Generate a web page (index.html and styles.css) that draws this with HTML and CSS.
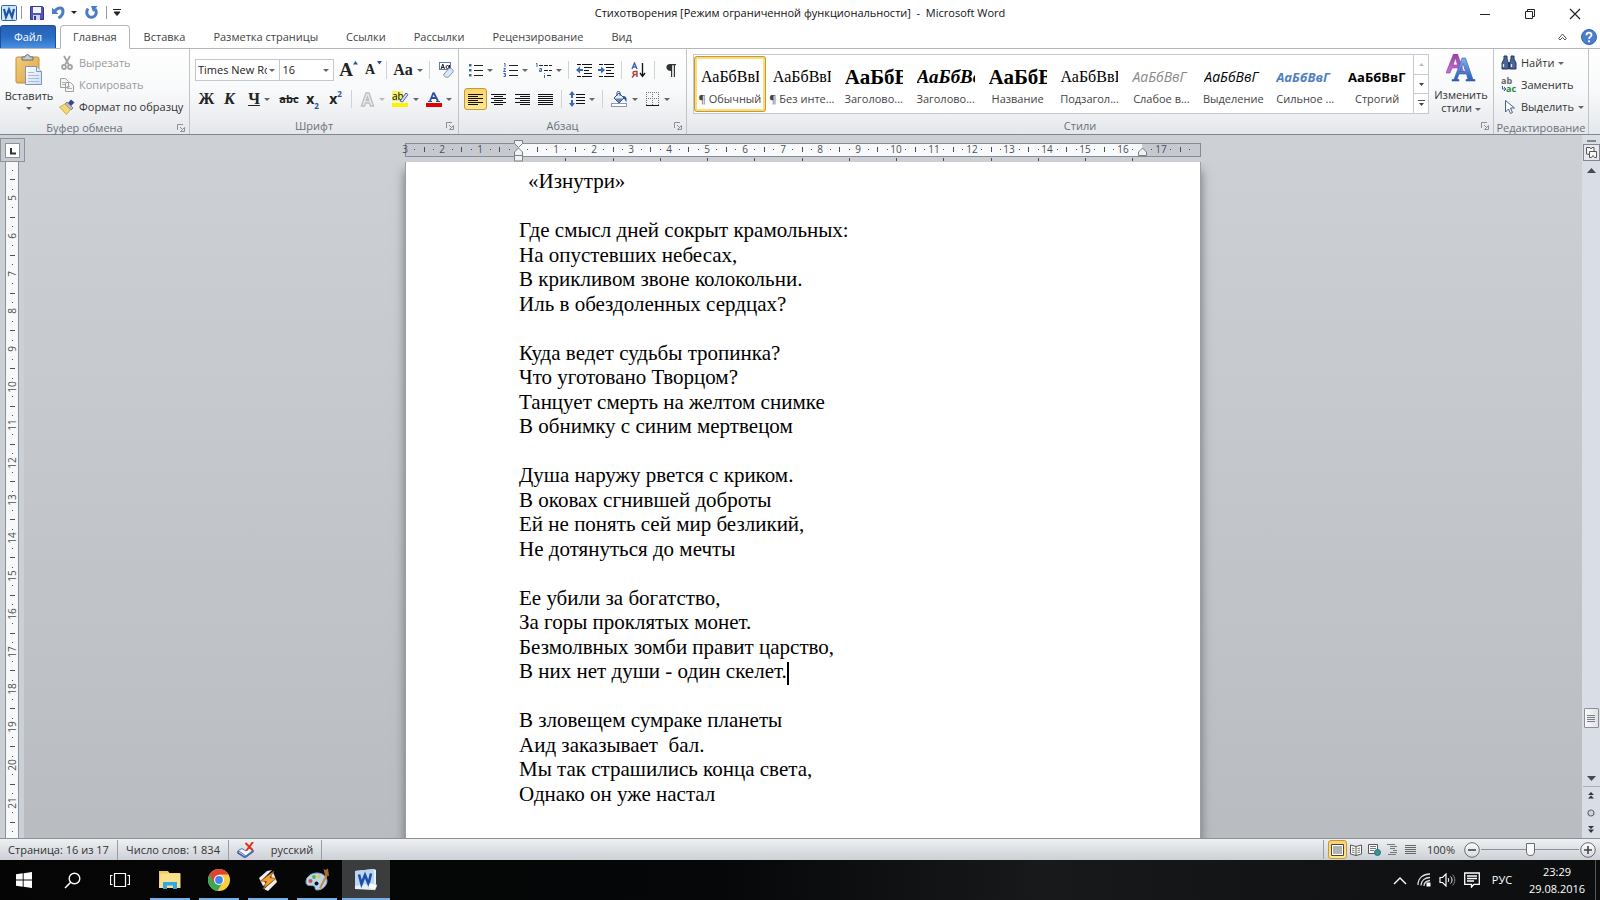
FILE: index.html
```html
<!DOCTYPE html>
<html lang="ru">
<head>
<meta charset="utf-8">
<title>Стихотворения - Microsoft Word</title>
<link rel="stylesheet" href="styles.css">
</head>
<body>
<svg class="defs" aria-hidden="true">
  <defs>
    <linearGradient id="gBlue" x1="0" y1="0" x2="0" y2="1"><stop offset="0" stop-color="#7fb2ee"/><stop offset="1" stop-color="#2a5db8"/></linearGradient>
    <linearGradient id="gPurple" x1="0" y1="0" x2="0" y2="1"><stop offset="0" stop-color="#9a3fa8"/><stop offset="1" stop-color="#c872d4"/></linearGradient>
    <linearGradient id="gBoard" x1="0" y1="0" x2="1" y2="1"><stop offset="0" stop-color="#f3cd7c"/><stop offset="1" stop-color="#dda443"/></linearGradient>
    <linearGradient id="gPage" x1="0" y1="0" x2="1" y2="1"><stop offset="0" stop-color="#fff"/><stop offset="1" stop-color="#c9dcf5"/></linearGradient>
    <linearGradient id="gKnob" x1="0" y1="0" x2="0" y2="1"><stop offset="0" stop-color="#fff"/><stop offset="1" stop-color="#d4d7db"/></linearGradient>
    <symbol id="launch" viewBox="0 0 8 8"><path d="M.5 6V.5H6M3 3l3 3M7.500 3.500v4h-4z" fill="none" stroke="#8a8f98"/></symbol>
  </defs>
</svg>

<header class="titlebar">
  <div class="quick">
    <svg width="16" height="16" viewBox="0 0 16 16"><rect x=".5" y=".5" width="15" height="15" rx="1" fill="#d3e6fa" stroke="#2b62ad"/><path d="M3 4l2 8 3-7.500L11 12l2-8" fill="none" stroke="#1d56a8" stroke-width="2.200"/></svg>
    <i class="bar"></i>
    <button class="qbtn" aria-label="Сохранить"><svg width="14" height="14" viewBox="0 0 14 14"><path d="M.5.5h12l1 1v12H.5z" fill="#5257b5" stroke="#33388f"/><rect x="3" y="1" width="8" height="6" fill="#f2f5fc"/><rect x="3" y="9" width="7" height="5" fill="#cfd4ea"/><rect x="4" y="10" width="2" height="4" fill="#33388f"/></svg></button>
    <button class="qbtn undo" aria-label="Отменить"><svg width="13" height="13" viewBox="0 0 13 13"><path d="M3 5C6 1 11 1 11 5.500c0 3-2 5-4.500 6.500" fill="none" stroke="#4a7cc8" stroke-width="3"/><path d="M0 1.500v6.500h6.500z" fill="#4a7cc8"/></svg><span class="arr dark"></span></button>
    <button class="qbtn" aria-label="Повторить"><svg width="13" height="13" viewBox="0 0 13 13"><path d="M3 2.500C0 7 3 11.300 6.500 11.300S13 7 10 3" fill="none" stroke="#4a7cc8" stroke-width="3"/><path d="M6 0h6.500L8 6z" fill="#4a7cc8"/></svg></button>
    <i class="bar"></i>
    <button class="qbtn narrow" aria-label="Настройка панели"><svg width="8" height="7" viewBox="0 0 8 7"><path d="M0 .5h8M1 3h6L4 6.500z" stroke="#222" fill="#222" stroke-width="1"/></svg></button>
  </div>
  <h1 class="caption">Стихотворения [Режим ограниченной функциональности]&nbsp; -&nbsp; Microsoft Word</h1>
  <div class="winbtns">
    <button aria-label="Свернуть"><svg width="12" height="12" viewBox="0 0 12 12"><path d="M1 6.500h10" stroke="#222"/></svg></button>
    <button aria-label="Восстановить"><svg width="12" height="12" viewBox="0 0 12 12"><path d="M1.500 3.500h7v7h-7zM3.500 3V1.500h7v7H9" fill="none" stroke="#222"/></svg></button>
    <button aria-label="Закрыть"><svg width="12" height="12" viewBox="0 0 12 12"><path d="M1 1l10 10M11 1L1 11" stroke="#222" stroke-width="1.200"/></svg></button>
  </div>
</header>

<nav class="tabs">
  <button class="tab file">Файл</button>
  <button class="tab active">Главная</button>
  <button class="tab">Вставка</button>
  <button class="tab">Разметка страницы</button>
  <button class="tab">Ссылки</button>
  <button class="tab">Рассылки</button>
  <button class="tab">Рецензирование</button>
  <button class="tab">Вид</button>
  <div class="tabtools">
    <button aria-label="Свернуть ленту"><svg width="9" height="8" viewBox="0 0 9 8"><path d="M.7 5.500L4.500 1l3.800 4.500L7 7 4.500 4.500 2 7z" fill="#fff" stroke="#555"/></svg></button>
    <button aria-label="Справка"><svg width="16" height="16" viewBox="0 0 16 16"><circle cx="8" cy="8" r="7.500" fill="#4a7fd0" stroke="#2f62b0"/><path d="M5.500 6.200C5.500 2.800 10.700 3 10.500 6 10.400 7.800 8 7.800 8 10" fill="none" stroke="#fff" stroke-width="1.800"/><circle cx="8" cy="12.300" r="1.100" fill="#fff"/></svg></button>
  </div>
</nav>

<section class="ribbon">
  <div class="group clip">
    <div class="gbody">
      <button class="big paste">
        <svg width="28" height="32" viewBox="0 0 28 32"><rect x="1" y="3" width="23" height="26" rx="1.500" fill="url(#gBoard)" stroke="#c08f3a"/><path d="M7 6V3h3c0-3 5-3 5 0h3v3z" fill="#c9ccd2" stroke="#666b74"/><path d="M10.500 12.500h11l5 5v13h-16z" fill="url(#gPage)" stroke="#7d95b8"/><path d="M21.500 12.500v5h5" fill="#e2ecf8" stroke="#7d95b8"/><path d="M13 18.500h6M13 21.500h11M13 24.500h11M13 27.500h11" stroke="#a9bbd6"/></svg>
        <span>Вставить</span><span class="arr"></span>
      </button>
      <div class="stack">
        <button class="small off"><svg width="16" height="16" viewBox="0 0 16 16"><path d="M5 1l5 9M11 1L6 10" stroke="#a4a4a4" stroke-width="1.800"/><circle cx="5" cy="12" r="2" fill="none" stroke="#a4a4a4" stroke-width="1.800"/><circle cx="11" cy="12" r="2" fill="none" stroke="#a4a4a4" stroke-width="1.800"/></svg>Вырезать</button>
        <button class="small off"><svg width="16" height="16" viewBox="0 0 16 16"><path d="M1.500 1.500h5l3 3v6h-8zM6.500 5.500h5l3 3v6h-8z" fill="#f4f4f4" stroke="#a0a0a0"/><path d="M3 5.500h3M3 7.500h3M8 9.500h3M8 11.500h5" stroke="#b4b4b4"/></svg>Копировать</button>
        <button class="small"><svg width="16" height="16" viewBox="0 0 16 16"><path d="M9 4l3-3.500 3.500 3L12 7z" fill="#39488c"/><path d="M6 5l2-2 6 6-2 2z" fill="#b9bec8" stroke="#59606c" stroke-width=".7"/><path d="M.5 8L6 5l5.500 5.500L7.500 15.500z" fill="#f2d774" stroke="#b79a35" stroke-width=".7"/></svg>Формат по образцу</button>
      </div>
    </div>
    <div class="glabel"><span>Буфер обмена</span><button class="launch" aria-label="Буфер обмена: параметры"><svg width="8" height="8"><use href="#launch"/></svg></button></div>
  </div>

  <div class="group font">
    <div class="gbody rows">
      <div class="row">
        <label class="combo face"><input type="text" value="Times New Roman" aria-label="Шрифт"><span class="arr"></span></label>
        <label class="combo size"><input type="text" value="16" aria-label="Размер шрифта"><span class="arr"></span></label>
        <button class="t w24 serif g18">A<svg class="sup" width="5" height="4" viewBox="0 0 5 4"><path d="M2.500 0L5 3.500H0z" fill="#2c4f9e"/></svg></button>
        <button class="t w24 serif g14">A<svg class="sup" width="5" height="4" viewBox="0 0 5 4"><path d="M0 0h5L2.500 3.500z" fill="#2c4f9e"/></svg></button>
        <i class="sep"></i>
        <button class="t w34 serif g15">Aa<span class="arr"></span></button>
        <i class="sep"></i>
        <button class="t w24" aria-label="Очистить формат"><svg width="16" height="16" viewBox="0 0 16 16"><rect x="1.500" y=".5" width="11" height="7" fill="#fff" stroke="#5b7bb4"/><path d="M3 7l1.800-5L6.500 7M3.500 5.500H6" fill="none" stroke="#222"/><circle cx="9.500" cy="5" r="1.500" fill="none" stroke="#222"/><path d="M11.500 3v4" stroke="#222"/><path d="M6 12l5-5.500c2-1 5 1.500 4 3.500l-4.500 5C8 16 5 14 6 12z" fill="#dbe6f6" stroke="#7c90b4"/></svg></button>
      </div>
      <div class="row">
        <button class="t w23 serif g15">Ж</button>
        <button class="t w23 serif g15 it">К</button>
        <button class="t w36 serif g15"><u>Ч</u><span class="arr"></span></button>
        <button class="t w24 sans g11"><s>abc</s></button>
        <button class="t w23 sans g14">x<sub>2</sub></button>
        <button class="t w23 sans g14">x<sup>2</sup></button>
        <i class="sep"></i>
        <button class="t w32" aria-label="Эффекты текста"><svg width="15" height="15" viewBox="0 0 15 15"><path d="M1.500 14L6 1h3l4.500 13h-3L9.500 11h-4l-1 3zM6.300 8.500h2.400L7.500 5z" fill="#eee" stroke="#bcbec3" stroke-width="1.400"/></svg><span class="arr pale"></span></button>
        <button class="t w34" aria-label="Цвет выделения"><svg width="17" height="16" viewBox="0 0 17 16"><rect width="11" height="10" fill="#f6f26a"/><text x="0" y="9" class="abtxt">ab</text><path d="M8 10l6-8 2 1.500L10.500 11z" fill="#cfe0f8" stroke="#4467a8"/><rect y="12" width="16" height="4" fill="#ffef00"/></svg><span class="arr"></span></button>
        <button class="t w34" aria-label="Цвет текста"><svg width="16" height="16" viewBox="0 0 16 16"><path d="M4 10L7.500 1.500M7.500 1.500L12 10M5.500 7h5" fill="none" stroke="#2c4f9e" stroke-width="1.800"/><path d="M2 10.500h4M10 10.500h4" stroke="#2c4f9e"/><rect y="12" width="16" height="4" fill="#e00000"/></svg><span class="arr"></span></button>
      </div>
    </div>
    <div class="glabel"><span>Шрифт</span><button class="launch" aria-label="Шрифт: параметры"><svg width="8" height="8"><use href="#launch"/></svg></button></div>
  </div>

  <div class="group para">
    <div class="gbody rows">
      <div class="row">
        <button class="t w34" aria-label="Маркеры"><svg width="14" height="14" viewBox="0 0 14 14"><path d="M5 2.500h9M5 7.500h9M5 12.500h9" stroke="#222"/><path d="M0 1h2.500v2.500H0zM0 6h2.500v2.500H0zM0 11h2.500v2.500H0z" fill="#3d67b5"/></svg><span class="arr"></span></button>
        <button class="t w34" aria-label="Нумерация"><svg width="15" height="14" viewBox="0 0 15 14"><path d="M6 2.500h9M6 7.500h9M6 12.500h9" stroke="#222"/><path d="M1 .5h1V4M.5 5.500h2L.5 8.500h2.500M.5 10.500h2v1.300h-1 1v1.700h-2" fill="none" stroke="#3d67b5"/></svg><span class="arr"></span></button>
        <button class="t w32" aria-label="Многоуровневый список"><svg width="17" height="15" viewBox="0 0 17 15"><path d="M4 2.500h13M9 7.500h8M12 12.500h5" stroke="#222" stroke-dasharray="4 1"/><path d="M1 .5h1V4M4.500 5.500h2v3h-2v-1.500h2M9.500 10v.8M9.500 12v3" fill="none" stroke="#3d67b5"/></svg><span class="arr"></span></button>
        <i class="sep"></i>
        <button class="t w22" aria-label="Уменьшить отступ"><svg width="16" height="14" viewBox="0 0 16 14"><path d="M1 1.500h4M6 1.500h10M8 4.500h8M8 7.500h5M8 10.500h8M1 13.500h4M6 13.500h10" stroke="#111" stroke-width="1.200"/><path d="M0 7l4-3.500v2.500h3v2H4v2.500z" fill="#3d67b5"/></svg></button>
        <button class="t w22" aria-label="Увеличить отступ"><svg width="16" height="14" viewBox="0 0 16 14"><path d="M1 1.500h4M6 1.500h10M8 4.500h8M8 7.500h5M8 10.500h8M1 13.500h4M6 13.500h10" stroke="#111" stroke-width="1.200"/><path d="M7 7L3 3.500v2.500H0v2h3v2.500z" fill="#3d67b5"/></svg></button>
        <i class="sep"></i>
        <button class="t w24" aria-label="Сортировка"><svg width="15" height="16" viewBox="0 0 15 16"><path d="M1 7L3.500 1 6 7M2 5h3" fill="none" stroke="#3d67b5" stroke-width="1.400"/><path d="M6 15V9.500H3.500c-2 0-2 3 0 3H6M3.500 12.500L1 15.500" fill="none" stroke="#a8443c" stroke-width="1.400"/><path d="M11.500 1v13M9 11l2.500 3.500L14 11" fill="none" stroke="#111" stroke-width="1.300"/></svg></button>
        <i class="sep"></i>
        <button class="t w24" aria-label="Отобразить все знаки"><svg width="10" height="13" viewBox="0 0 10 13"><path d="M5 7C-1 7-1 0 4 0h6v1.200H9V13H7.800V1.200H6.200V13H5z" fill="#333"/></svg></button>
      </div>
      <div class="row">
        <button class="t w23 on" aria-label="По левому краю"><svg width="15" height="11" viewBox="0 0 15 11"><path d="M0 .5h15M0 2.500h10M0 4.500h15M0 6.500h10M0 8.500h15M0 10.500h10" stroke="#111"/></svg></button>
        <button class="t w23" aria-label="По центру"><svg width="15" height="11" viewBox="0 0 15 11"><path d="M0 .5h15M3 2.500h9M0 4.500h15M3 6.500h9M0 8.500h15M3 10.500h9" stroke="#111"/></svg></button>
        <button class="t w24" aria-label="По правому краю"><svg width="15" height="11" viewBox="0 0 15 11"><path d="M0 .5h15M5 2.500h10M0 4.500h15M5 6.500h10M0 8.500h15M5 10.500h10" stroke="#111"/></svg></button>
        <button class="t w23" aria-label="По ширине"><svg width="15" height="11" viewBox="0 0 15 11"><path d="M0 .5h15M0 2.500h15M0 4.500h15M0 6.500h15M0 8.500h15M0 10.500h15" stroke="#111"/></svg></button>
        <i class="sep"></i>
        <button class="t w32" aria-label="Интервал"><svg width="16" height="16" viewBox="0 0 16 16"><path d="M7 3.500h9M7 6.500h9M7 9.500h9M7 12.500h9" stroke="#111"/><path d="M3 0l3 4H4v3H2V4H0zM3 16l3-4H4V9H2v3H0z" fill="#3d67b5"/></svg><span class="arr"></span></button>
        <i class="sep"></i>
        <button class="t w34" aria-label="Заливка"><svg width="17" height="16" viewBox="0 0 17 16"><path d="M3 7l5-5 5 5-5 5z" fill="#e6eefa" stroke="#334a7c"/><path d="M4 7.500h8.500L8 11.500z" fill="#5c82c4"/><path d="M6 5V1.500c0-1.500 3-1.500 3 0V5" fill="none" stroke="#334a7c"/><path d="M12 5c3 0 4 2 3.500 6-1.500-1-1.500-3-3-4z" fill="#2d5299"/><rect x=".5" y="12.500" width="15" height="3" fill="#fff" stroke="#8c98b0"/></svg><span class="arr"></span></button>
        <button class="t w34" aria-label="Границы"><svg width="14" height="14" viewBox="0 0 14 14"><path d="M.5 0v13M6.500 0v13M12.500 0v13M0 .5h13M0 6.500h13" stroke="#777" stroke-dasharray="1 1"/><path d="M0 13.500h13" stroke="#111"/></svg><span class="arr"></span></button>
      </div>
    </div>
    <div class="glabel"><span>Абзац</span><button class="launch" aria-label="Абзац: параметры"><svg width="8" height="8"><use href="#launch"/></svg></button></div>
  </div>

  <div class="group styles">
    <div class="gbody">
      <div class="gallery">
        <button class="style sel"><span class="pv">АаБбВвГ</span><span class="nm">¶ Обычный</span></button>
        <button class="style"><span class="pv">АаБбВвГ</span><span class="nm">¶ Без инте...</span></button>
        <button class="style"><span class="pv head">АаБбВ</span><span class="nm">Заголово...</span></button>
        <button class="style"><span class="pv head2">АаБбВв</span><span class="nm">Заголово...</span></button>
        <button class="style"><span class="pv head">АаБбВ</span><span class="nm">Название</span></button>
        <button class="style"><span class="pv">АаБбВвГ</span><span class="nm">Подзагол...</span></button>
        <button class="style"><span class="pv weak">АаБбВвГ</span><span class="nm">Слабое в...</span></button>
        <button class="style"><span class="pv emph">АаБбВвГ</span><span class="nm">Выделение</span></button>
        <button class="style"><span class="pv strong">АаБбВвГ</span><span class="nm">Сильное ...</span></button>
        <button class="style"><span class="pv bold">АаБбВвГ</span><span class="nm">Строгий</span></button>
        <div class="gscroll">
          <button aria-label="Вверх"><svg width="5" height="3" viewBox="0 0 5 3"><path d="M0 3h5L2.500 0z" fill="#bbb"/></svg></button>
          <button aria-label="Вниз"><svg width="5" height="3" viewBox="0 0 5 3"><path d="M0 0h5L2.500 3z" fill="#444"/></svg></button>
          <button aria-label="Ещё"><svg width="7" height="7" viewBox="0 0 7 7"><path d="M0 .5h7" stroke="#555"/><path d="M1 3h5L3.500 6z" fill="#444"/></svg></button>
        </div>
      </div>
      <button class="big change">
        <svg width="30" height="28" viewBox="0 0 30 28"><path d="M0 19L7.500 0h4L18 19h-4l-1.500-5H6l-2 5zM7 11h4.500L9.500 4z" fill="url(#gPurple)" stroke="#8a3a98" stroke-width=".6"/><path d="M6 27v-1.500h2L16 4h3.500L27 25.500h2V27h-9v-1.500h2L20.500 20H13l-2 5.500h2V27zM14 17.500h5.500L17 9.500z" fill="url(#gBlue)" stroke="#2c5ba8" stroke-width=".6"/></svg>
        <span>Изменить</span><span>стили <span class="arr"></span></span>
      </button>
    </div>
    <div class="glabel"><span>Стили</span><button class="launch" aria-label="Стили: параметры"><svg width="8" height="8"><use href="#launch"/></svg></button></div>
  </div>

  <div class="group edit">
    <div class="gbody">
      <div class="stack">
        <button class="small"><svg width="16" height="16" viewBox="0 0 16 16"><path d="M3 1h3v3l1.500 3v7H1V8l2-4zM10 1h3v3l2 4v6H8.500V7L10 4z" fill="#4a6496" stroke="#26385f"/><path d="M2.500 9v3M10.500 9v3M7 6h2" stroke="#dfe8f6" stroke-width="1.300"/></svg>Найти <span class="arr"></span></button>
        <button class="small"><svg width="16" height="16" viewBox="0 0 16 16"><text x="0" y="7" class="rep1">ab</text><text x="5" y="15" class="rep2">ac</text><path d="M1.500 9v3H4M3 10l2 2-2 2" fill="none" stroke="#2f5aa8"/></svg>Заменить</button>
        <button class="small"><svg width="16" height="16" viewBox="0 0 16 16"><path d="M4.500 1.500v11.500l3-3 2 4.500 2-1-2-4.500h4z" fill="#fff" stroke="#4a5f8e"/></svg>Выделить <span class="arr"></span></button>
      </div>
    </div>
    <div class="glabel"><span>Редактирование</span></div>
  </div>
  <div class="rest"></div>
</section>

<main class="workspace">
  <aside class="left">
    <button class="tabsel" aria-label="Табуляция"><svg width="15" height="15" viewBox="0 0 15 15"><rect x=".5" y=".5" width="14" height="14" fill="#fff" stroke="#8c9299"/><path d="M6 5v5.500h5" fill="none" stroke="#333" stroke-width="2"/></svg></button>
    <div class="vruler"><svg id="vruler" width="12" height="676"></svg></div>
  </aside>
  <div class="center">
    <div class="hruler"><svg id="hruler" width="812" height="27"></svg></div>
    <div class="canvas">
      <article class="page">
        <div class="stanza title">
          <p>«Изнутри»</p>
        </div>
        <div class="stanza">
          <p>Где смысл дней сокрыт крамольных:</p>
          <p>На опустевших небесах,</p>
          <p>В крикливом звоне колокольни.</p>
          <p>Иль в обездоленных сердцах?</p>
        </div>
        <div class="stanza">
          <p>Куда ведет судьбы тропинка?</p>
          <p>Что уготовано Творцом?</p>
          <p>Танцует смерть на желтом снимке</p>
          <p>В обнимку с синим мертвецом</p>
        </div>
        <div class="stanza">
          <p>Душа наружу рвется с криком.</p>
          <p>В оковах сгнившей доброты</p>
          <p>Ей не понять сей мир безликий,</p>
          <p>Не дотянуться до мечты</p>
        </div>
        <div class="stanza">
          <p>Ее убили за богатство,</p>
          <p>За горы проклятых монет.</p>
          <p>Безмолвных зомби правит царство,</p>
          <p>В них нет души - один скелет.<span class="caret"></span></p>
        </div>
        <div class="stanza">
          <p>В зловещем сумраке планеты</p>
          <p>Аид заказывает&nbsp; бал.</p>
          <p>Мы так страшились конца света,</p>
          <p>Однако он уже настал</p>
        </div>
      </article>
    </div>
  </div>
  <aside class="scroll">
    <i class="split"></i>
    <button class="rtoggle" aria-label="Линейка"><svg width="17" height="17" viewBox="0 0 17 17"><rect x=".5" y=".5" width="16" height="16" fill="#e6e9ed" stroke="#80868e"/><path d="M3.500 10V3.500H7L8 5l1-1.500h2v4M3.500 10l3 .5M6.500 7.500h7v6h-2l-1.500-2-1.500 2h-2z" fill="#f8f8f8" stroke="#555"/></svg></button>
    <button class="sb" aria-label="Вверх"><svg width="9" height="5" viewBox="0 0 9 5"><path d="M0 5h9L4.500 0z" fill="#444a54"/></svg></button>
    <div class="track"><button class="thumb" aria-label="Прокрутка"><svg width="8" height="7" viewBox="0 0 8 7"><path d="M0 .5h8M0 2.500h8M0 4.500h8M0 6.500h8" stroke="#777d86"/></svg></button></div>
    <button class="sb low" aria-label="Вниз"><svg width="9" height="5" viewBox="0 0 9 5"><path d="M0 0h9L4.500 5z" fill="#444a54"/></svg></button>
    <button class="sb nav" aria-label="Предыдущая"><svg width="6" height="7" viewBox="0 0 6 7"><path d="M0 3h6L3 0zM0 6.500h6L3 3.500z" fill="#333"/></svg></button>
    <button class="sb nav" aria-label="Выбор объекта"><svg width="8" height="8" viewBox="0 0 8 8"><circle cx="4" cy="4" r="3" fill="#d0d4da" stroke="#666c76" stroke-width="1.200"/></svg></button>
    <button class="sb nav" aria-label="Следующая"><svg width="6" height="7" viewBox="0 0 6 7"><path d="M0 0h6L3 3zM0 3.500h6L3 7z" fill="#333"/></svg></button>
  </aside>
</main>

<footer class="status">
  <button class="st page-no">Страница: 16 из 17</button>
  <button class="st words">Число слов: 1 834</button>
  <button class="st spell" aria-label="Правописание"><svg width="18" height="16" viewBox="0 0 18 16"><path d="M1 8.500l4-2 4 2.500 3-3 4 2-7 6z" fill="#f4f6fa" stroke="#5b76ac"/><path d="M1 9v2l7 4.500 8-6V8" fill="none" stroke="#3f62a8" stroke-width="1.500"/><path d="M8.500 1l7 7M16 0L9.500 8.500" stroke="#e0301e" stroke-width="2"/></svg></button>
  <button class="st lang">русский</button>
  <div class="views">
    <button class="view on" aria-label="Разметка страницы"><svg width="13" height="12" viewBox="0 0 13 12"><path d="M.5.5h12v11H.5z" fill="#fff" stroke="#444"/><path d="M2 3h9M2 5h9M2 7h9M2 9h9" stroke="#666"/></svg></button>
    <button class="view" aria-label="Режим чтения"><svg width="12" height="12" viewBox="0 0 12 12"><path d="M.5 1L6 2.500 11.500 1v9L6 11.500.5 10zM6 2.500v9" fill="#fff" stroke="#555"/><path d="M2 4l2.500.7M2 6l2.500.7M2 8l2.500.7M10 4l-2.500.7M10 6l-2.500.7M10 8l-2.500.7" stroke="#777"/></svg></button>
    <button class="view" aria-label="Веб-документ"><svg width="13" height="12" viewBox="0 0 13 12"><path d="M.5.5h9v9h-9z" fill="#fff" stroke="#555"/><path d="M2 2.500h6M2 4.500h6M2 6.500h4" stroke="#777"/><circle cx="9.500" cy="8.500" r="3" fill="#2f9a8c" stroke="#2a6d92"/></svg></button>
    <button class="view" aria-label="Структура"><svg width="11" height="11" viewBox="0 0 11 11"><path d="M0 .5h8M3 2.500h7M3 4.500h5M6 6.500h4M3 8.500h7M1 10.500h8" stroke="#777"/></svg></button>
    <button class="view" aria-label="Черновик"><svg width="11" height="9" viewBox="0 0 11 9"><path d="M0 .5h11M0 2.500h11M0 4.500h11M0 6.500h11M0 8.500h11" stroke="#666"/></svg></button>
  </div>
  <button class="zoomv">100%</button>
  <button class="zb" aria-label="Уменьшить"><svg width="16" height="16" viewBox="0 0 16 16"><circle cx="8" cy="8" r="7.300" fill="url(#gKnob)" stroke="#666b73"/><path d="M4 8h8" stroke="#444" stroke-width="1.600"/></svg></button>
  <input class="zoom" type="range" min="0" max="100" value="50" aria-label="Масштаб">
  <button class="zb" aria-label="Увеличить"><svg width="16" height="16" viewBox="0 0 16 16"><circle cx="8" cy="8" r="7.300" fill="url(#gKnob)" stroke="#666b73"/><path d="M4 8h8M8 4v8" stroke="#444" stroke-width="1.600"/></svg></button>
</footer>

<div class="taskbar">
  <div class="sys">
    <button aria-label="Пуск"><svg width="16" height="16" viewBox="0 0 16 16"><path d="M0 2.300L6.700 1.300v6.200H0zM7.600 1.200L16 0v7.500H7.600zM0 8.400h6.700v6.300L0 13.700zM7.600 8.400H16V16l-8.400-1.200z" fill="#fff"/></svg></button>
    <button aria-label="Поиск"><svg width="17" height="17" viewBox="0 0 17 17"><circle cx="10.500" cy="6.500" r="5.300" fill="none" stroke="#fff" stroke-width="1.400"/><path d="M6.700 10.300L1 16" stroke="#fff" stroke-width="1.600"/></svg></button>
    <button aria-label="Представление задач"><svg width="20" height="16" viewBox="0 0 20 16"><path d="M4.500 1.500h11v13h-11zM2.500 3.500h-2v9h2M17.500 3.500h2v9h-2" fill="none" stroke="#fff" stroke-width="1.200"/></svg></button>
  </div>
  <div class="apps">
    <button class="app" aria-label="Проводник"><svg width="22" height="20" viewBox="0 0 22 20"><path d="M0 1h9l1.500 2H21v15H0z" fill="#f3c95a"/><path d="M1.500 3.500H21.500V18H0z" fill="#fbe08c"/><path d="M4 19v-7h14v7h-4v-3.500H8V19z" fill="#2fa9e6"/></svg></button>
    <button class="app" aria-label="Chrome"><svg width="22" height="22" viewBox="0 0 22 22"><circle cx="11" cy="11" r="11" fill="#f9cf3c"/><path d="M11 11L1.500 5.500a11 11 0 0 0 8 16.400z" fill="#3fa556"/><path d="M1.500 5.500a11 11 0 0 1 19 0H11l-5 8z" fill="#db4437"/><path d="M6.500 13.500L9.500 21.900l5-8.400z" fill="#3fa556"/><circle cx="11" cy="11" r="5" fill="#fff"/><circle cx="11" cy="11" r="3.900" fill="#4285f4"/></svg></button>
    <button class="app" aria-label="Winamp"><svg width="22" height="22" viewBox="0 0 22 22"><path d="M2 9L10 2l5-1-9 9zM7 20l9-8 4 1-9 9zM2 9l4 8 3-2-3-5zM16 3l4 10-4-1-2-5z" fill="#eee"/><path d="M17 2L3.500 12l6 .5L6 20l13-10.500-6-1z" fill="#f3a02c" stroke="#8a4a10" stroke-width=".7"/></svg></button>
    <button class="app" aria-label="Paint"><svg width="24" height="24" viewBox="0 0 24 24"><path d="M1 14c0-5 5-9 11-9s10 4 10 8-4 9-10 9c-3 0-1-3-3-4s-8 1-8-4z" fill="#b9d8ee" stroke="#7ea6c4"/><circle cx="5.500" cy="13" r="2" fill="#d84c3c"/><circle cx="9" cy="9" r="1.900" fill="#58b34c"/><circle cx="14" cy="8.500" r="1.800" fill="#e6c63c"/><circle cx="11.500" cy="15.500" r="2" fill="#14171a"/><path d="M14 20L20.500 7l2 1-6.500 12.500z" fill="#c98a3e"/><path d="M20 7.500L18.500 1l2 1L23 .5l1 7.500z" fill="#a9683a"/></svg></button>
    <button class="app current" aria-label="Word"><svg width="22" height="22" viewBox="0 0 22 22"><path d="M0 2L19 0l2 1v18l-3 2-18-1z" fill="#e6f0fb"/><path d="M0 2L19 0v14L0 17z" fill="#bcd5f3"/><path d="M4 5.500l2.500 9.500 3.500-9 3.500 9L16 4.500" fill="none" stroke="#1c50a8" stroke-width="2.600"/><path d="M15 14l7 2-2 5-7-2z" fill="#fff" stroke="#c5d4e8" stroke-width=".6"/></svg></button>
  </div>
  <div class="tray">
    <button class="more" aria-label="Скрытые значки"><svg width="14" height="9" viewBox="0 0 14 9"><path d="M1 8l6-6 6 6" fill="none" stroke="#fff" stroke-width="1.400"/></svg></button>
    <button class="net" aria-label="Сеть"><svg width="14" height="14" viewBox="0 0 14 14"><path d="M1 12C1 5 6 1 13 1M4 12.500c0-5 4-8 9-8M7 13c0-3 2-5 6-5.500" fill="none" stroke="#ddd" stroke-width="1.300"/><rect x="9.500" y="9.500" width="4" height="4" fill="#fff"/></svg></button>
    <button aria-label="Громкость"><svg width="17" height="14" viewBox="0 0 17 14"><path d="M1 4.500h2.500L7 1v12L3.500 9.500H1z" fill="none" stroke="#fff" stroke-width="1.200"/><path d="M9 5c1 1.200 1 2.800 0 4M11.500 3.500c2 2 2 5 0 7" fill="none" stroke="#fff"/><path d="M13.500 1.500c3 3 3 8 0 11" fill="none" stroke="#888"/></svg></button>
    <button class="note" aria-label="Уведомления"><svg width="16" height="16" viewBox="0 0 16 16"><path d="M.7 1h14.600v11.300H10L7.500 15v-2.700H.7zM3 4h10M3 6.500h10M3 9h7" fill="none" stroke="#fff" stroke-width="1.300"/></svg></button>
    <button class="kb">РУС</button>
    <button class="clock"><time>23:29</time><time>29.08.2016</time></button>
    <i class="desk"></i>
  </div>
</div>
<script src="rulers.js"></script>
</body>
</html>
```
FILE: styles.css
```css
* { box-sizing: border-box; }
html, body { height: 100%; }
body {
  margin: 0;
  display: flex;
  flex-direction: column;
  overflow: hidden;
  background: #fff;
  color: #333;
  font: 11px/16px "Open Sans", "Noto Sans", sans-serif;
}
button, input { font: inherit; color: inherit; }
button {
  display: inline-flex;
  align-items: center;
  justify-content: center;
  margin: 0;
  padding: 0;
  border: 0;
  background: none;
  white-space: nowrap;
}
svg { display: block; flex: none; }
.defs { position: absolute; width: 0; height: 0; }
.arr {
  display: inline-block;
  flex: none;
  border: 3px solid transparent;
  border-top-color: #666;
  border-bottom: 0;
  vertical-align: middle;
}
.arr.dark { border-top-color: #222; }
.arr.pale { border-top-color: #bbb; }

/* title bar */
.titlebar { flex: none; height: 25px; display: grid; grid-template-columns: 1fr auto 1fr; align-items: center; }
.quick { display: flex; align-items: center; padding-left: 1px; height: 22px; }
.bar { width: 1px; height: 13px; margin: 0 4px; background: #999; }
.qbtn { width: 22px; height: 20px; }
.qbtn.undo { width: 32px; gap: 6px; }
.qbtn.narrow { width: 12px; }
.caption { margin: 0; font-size: 11px; font-weight: 400; color: #111; white-space: nowrap; }
.winbtns { display: flex; justify-content: flex-end; padding: 3px 3px 0 0; }
.winbtns button { width: 45px; height: 22px; }

/* tabs */
.tabs { flex: none; height: 24px; display: flex; align-items: stretch; border-bottom: 1px solid #b3b7bd; }
.tab { padding: 0 14px; color: #444; }
.tab.file {
  width: 56px;
  padding: 0;
  margin-right: 4px;
  border-radius: 3px 3px 0 0;
  background: linear-gradient(#2562b4, #2a6cc6 50%, #4a90e0);
  border: 1px solid #1c4f96;
  border-bottom: 0;
  color: #fff;
}
.tab.active { margin-bottom: -1px; padding: 0 12px; border: 1px solid #b3b7bd; border-bottom-color: #fff; border-radius: 4px 4px 0 0; background: #fff; }
.tabtools { margin-left: auto; display: flex; gap: 14px; padding-right: 3px; }

/* ribbon */
.ribbon {
  flex: none;
  height: 86px;
  display: flex;
  background: linear-gradient(#fff, #f8f9fa 50%, #e4e7eb);
  border-bottom: 1px solid #81878f;
}
.group { display: flex; flex-direction: column; border-right: 1px solid #c0c4ca; }
.clip { width: 190px; }
.font { width: 269px; }
.para { width: 228px; }
.styles { flex: 1; min-width: 0; }
.edit { width: 95px; }
.rest { width: 11px; }
.gbody { flex: 1; display: flex; }
.glabel { position: relative; height: 18px; display: flex; justify-content: center; align-items: center; padding: 2px 20px 0 0; color: #6a7078; white-space: nowrap; }
.edit .glabel { padding-right: 0; }
.launch { position: absolute; right: 4px; top: 6px; }
.big { flex: none; flex-direction: column; justify-content: flex-start; padding-top: 5px; }
.paste { width: 58px; }
.paste > span:not(.arr) { line-height: 20px; }
.paste .arr { margin-top: 1px; }
.stack { display: flex; flex-direction: column; padding-top: 3px; }
.small { height: 22px; justify-content: flex-start; gap: 4px; }
.small.off { color: #9a9a9a; }
.clip .stack { padding-left: 1px; }
.edit .stack { padding-left: 7px; }

.rows { flex-direction: column; padding: 7px 0 0 5px; gap: 1px; }
.row { display: flex; align-items: center; height: 28px; }
.sep { flex: none; width: 1px; height: 18px; margin: 0 4px; background: #cfd3d8; }
.combo { display: flex; align-items: center; height: 22px; padding-right: 4px; border: 1px solid #c4c7cc; background: #fff; color: #222; }
.combo input { flex: 1; min-width: 0; width: 0; border: 0; outline: 0; padding: 0 2px; background: none; }
.face { width: 86px; }
.size { width: 55px; margin-left: -1px; }
.t { position: relative; flex: none; height: 22px; gap: 4px; color: #222; }
.w22 { width: 22px; } .w23 { width: 23px; } .w24 { width: 24px; }
.w32 { width: 32px; } .w34 { width: 34px; } .w36 { width: 36px; }
.serif { font-family: "Liberation Serif", serif; font-weight: 700; }
.sans { font-weight: 700; gap: 0; }
.sans sub, .sans sup { font-size: 8px; line-height: 8px; color: #2c4f9e; }
.sans sub { align-self: flex-end; }
.sans sup { align-self: flex-start; margin-top: 2px; }
.it { font-style: italic; }
.g18 { font-size: 19px; } .g15 { font-size: 16px; } .g14 { font-size: 14px; } .g11 { font-size: 11px; }
.sup { position: absolute; right: 0; top: 2px; }
.on { border: 1px solid #c29a3a; border-radius: 3px; background: linear-gradient(#fbd46a, #fde88c); }
.abtxt { font: 10px "Open Sans", sans-serif; }
.rep1 { font: 700 9px "Open Sans", sans-serif; fill: #666; }
.rep2 { font: 700 9px "Open Sans", sans-serif; fill: #2a8a3a; }

.gallery { display: flex; flex: 1; min-width: 0; height: 60px; margin: 5px 0 0 6px; border: 1px solid #c6cacf; background: #fff; }
.style { flex: 1 1 0; min-width: 0; flex-direction: column; margin: 1px 0; border: 3px solid transparent; padding-top: 4px; gap: 3px; overflow: hidden; }
.style.sel { border-color: #fbdc77; outline: 1px solid #c29a3a; outline-offset: -1px; border-radius: 3px; }
.pv { width: 58px; height: 23px; overflow: hidden; text-align: left; line-height: 24px; font-family: "Liberation Serif", serif; font-size: 16px; color: #000; }
.pv.head { font-size: 21px; font-weight: 700; }
.pv.head2 { font-size: 19px; font-weight: 700; font-style: italic; }
.pv.weak, .pv.emph, .pv.strong, .pv.bold { font-family: "Open Sans", sans-serif; font-size: 14px; }
.pv.weak { color: #888; font-style: italic; }
.pv.emph { font-style: italic; }
.pv.strong, .pv.bold { font-size: 13px; font-weight: 700; }
.pv.strong { color: #4f81bd; font-style: italic; }
.nm { line-height: 16px; color: #444; }
.gscroll { width: 15px; display: flex; flex-direction: column; border-left: 1px solid #c6cacf; }
.gscroll button { flex: 1; border-top: 1px solid #c6cacf; }
.gscroll button:first-child { border-top: 0; }
.change { width: 64px; }
.change > span { line-height: 13px; }
.change > svg { margin-bottom: 6px; }

/* workspace */
.workspace { flex: 1; min-height: 0; display: grid; grid-template-columns: 24px 1fr 18px; background: linear-gradient(#cdd1d6, #b9bcc1); }
.left { display: flex; flex-direction: column; min-height: 0; background: #cbd0d6; }
.tabsel { flex: none; width: 25px; height: 24px; margin-top: 3px; border: 1px solid #8c9299; background: #c6cbd1; }
.vruler { flex: 1; min-height: 0; width: 14px; margin-left: 5px; overflow: hidden; background: #f7f8fa; border: 1px solid #8c9299; border-width: 0 1px; }
.center { display: flex; flex-direction: column; min-width: 0; min-height: 0; }
.hruler { flex: none; height: 27px; display: flex; justify-content: center; }
.canvas { flex: 1; min-height: 0; display: flex; justify-content: center; overflow: hidden; }
.page {
  width: 796px;
  padding: 7px 113px 0;
  background: #fff;
  border: 1px solid #9a9ea4;
  border-width: 0 1px;
  box-shadow: 0 8px 10px #6d7176;
  font: 21px/1.167 "Liberation Serif", serif;
  color: #000;
}
.page p { margin: 0; }
.stanza { margin-bottom: 1.167em; }
.title { text-indent: 9px; }
.caret { display: inline-block; width: 2px; height: 23px; margin: -4px 0; vertical-align: middle; background: #000; }

.scroll { display: flex; flex-direction: column; align-items: center; background: #d9dee6; }
.split { flex: none; width: 9px; height: 2px; margin: 5px 0 2px; background: #80868e; }
.sb { flex: none; width: 17px; height: 18px; }
.track { flex: 1; width: 17px; display: flex; flex-direction: column; }
.track::before { content: ""; flex: 531 1 0; }
.track::after { content: ""; flex: 43 1 0; }
.thumb { flex: none; width: 15px; height: 20px; margin: 0 1px; border: 1px solid #8b9098; border-radius: 1px; background: linear-gradient(90deg, #fafafb, #dfe2e6); }
.low { height: 16px; border-bottom: 1px solid #a9aeb6; }
.nav { height: 17px; }

/* ruler drawing */
.num { font: 10px "Open Sans", sans-serif; fill: #4c5056; text-anchor: middle; }
.tick { stroke: #4c5056; }

/* status bar */
.status { flex: none; height: 22px; display: flex; align-items: center; border-top: 1px solid #8b9097; background: linear-gradient(#eef0f2, #cdd1d6); color: #333; }
.st { height: 20px; border-right: 1px solid #999ea5; }
.page-no { width: 118px; }
.words { width: 111px; }
.spell { width: 34px; border: 0; }
.lang { width: 59px; }
.views { margin-left: auto; display: flex; border-left: 1px solid #999ea5; padding-left: 4px; }
.view { width: 18px; height: 19px; }
.view.on { width: 19px; }
.zoomv { width: 44px; }
.zb { width: 18px; height: 18px; }
.zoom { appearance: none; width: 98px; height: 18px; margin: 0; background: linear-gradient(#8b9098, #8b9098) center / 100% 1px no-repeat; }
.zoom::-webkit-slider-thumb { appearance: none; width: 9px; height: 13px; border: 1px solid #666b73; border-radius: 1px 1px 5px 5px; background: #fafafa; }
.status .zb:last-child { margin-right: 3px; }

/* taskbar */
.taskbar { flex: none; height: 40px; display: flex; background: linear-gradient(90deg, #050505, #060708 45%, #17191b 65%, #0c0d0f); color: #fff; }
.sys, .apps, .tray { display: flex; }
.sys button { width: 48px; }
.apps { margin-left: 2px; gap: 1px; }
.app { width: 48px; background: linear-gradient(#76b0e8, #76b0e8) bottom / 40px 2px no-repeat; }
.app.current { background: linear-gradient(#76b0e8, #76b0e8) bottom / 100% 2px no-repeat #3b3c3e; }
.tray { margin-left: auto; }
.tray button { width: 24px; }
.tray .more, .tray .note { width: 26px; }
.tray .net { width: 22px; }
.tray .kb { width: 34px; }
.tray .clock { width: 76px; flex-direction: column; line-height: 17px; }
.desk { width: 5px; border-left: 1px solid #555; }
```
FILE: rulers.js
```js
const NS = "http://www.w3.org/2000/svg";
const CM = 37.8;

function add(svg, name, attrs, text) {
  const el = document.createElementNS(NS, name);
  for (const key in attrs) el.setAttribute(key, attrs[key]);
  if (text !== undefined) el.textContent = text;
  svg.appendChild(el);
}

function drawHorizontal(svg) {
  const zero = 121, end = 745;
  add(svg, "rect", { x: 8.5, y: 8.5, width: 795, height: 13, fill: "#c6cad0", stroke: "#868c94" });
  add(svg, "rect", { x: zero, y: 9, width: end - zero, height: 12, fill: "#f8f9fb" });
  for (let q = -12; q <= 71; q++) {
    const x = Math.round(zero + q * CM / 4);
    if (q === 0 || q === 66) continue;
    if (q % 4 === 0) {
      add(svg, "text", { x: x, y: 18, class: "num" }, Math.abs(q / 4));
    } else {
      const h = q % 2 === 0 ? 5 : 1;
      add(svg, "path", { d: `M${x + 0.5} ${15 - Math.ceil(h / 2)}v${h}`, class: "tick" });
    }
  }
  for (let k = 1; k <= 13; k++) {
    const x = Math.round(zero + k * CM * 1.25);
    add(svg, "path", { d: `M${x + 0.5} 23v3`, class: "tick" });
  }
  const marker = { fill: "#f0f1f3", stroke: "#7a8088" };
  add(svg, "path", { d: "M117.500 5.500h8v3l-4 4-4-4z", ...marker });
  add(svg, "path", { d: "M121.500 13l4 4v9h-8v-9zM117.500 20.500h8", ...marker });
  add(svg, "path", { d: "M745.500 13l4 4v3.500h-8V17z", ...marker });
}

function drawVertical(svg) {
  const first = 36;
  for (let q = 1; q < 72; q++) {
    const y = Math.round(first - CM + q * CM / 4);
    if (q % 4 === 0) {
      add(svg, "text", { x: 0, y: 0, class: "num", transform: `translate(10 ${y}) rotate(-90)` }, 4 + q / 4);
    } else {
      const w = q % 2 === 0 ? 5 : 1;
      add(svg, "path", { d: `M${7 - Math.ceil(w / 2)} ${y + 0.5}h${w}`, class: "tick" });
    }
  }
}

drawHorizontal(document.getElementById("hruler"));
drawVertical(document.getElementById("vruler"));
```
